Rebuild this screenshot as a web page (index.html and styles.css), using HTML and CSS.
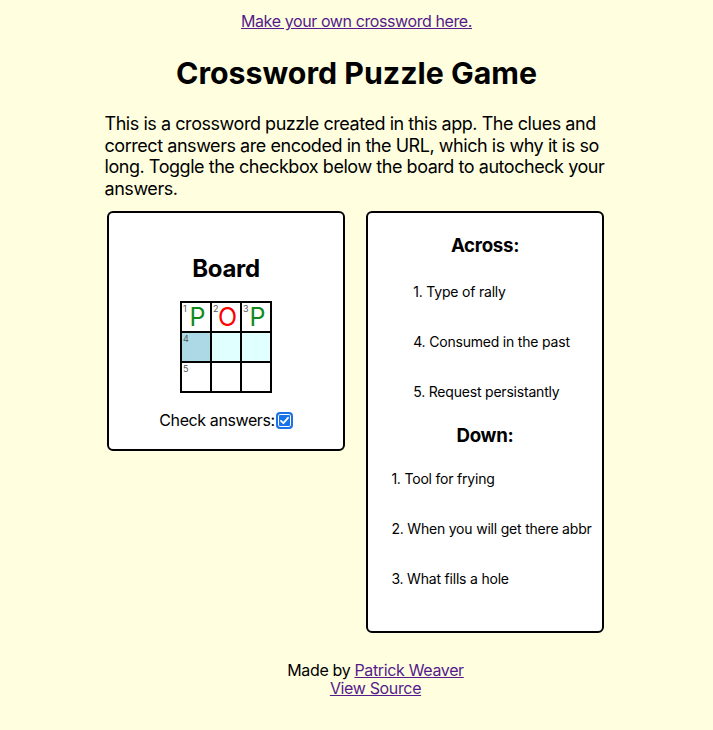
FILE: index.html
```html
<!DOCTYPE html>
<html lang="en">
<head>
<meta charset="utf-8">
<title>Crossword Puzzle Game</title>
<link rel="stylesheet" href="styles.css">
</head>
<body>
<div class="page">
  <a class="top-link" href="#">Make your own crossword here.</a>
  <h1 class="title">Crossword Puzzle Game</h1>
  <p class="intro">This is a crossword puzzle created in this app. The clues and correct answers are encoded in the URL, which is why it is so long. Toggle the checkbox below the board to autocheck your answers.</p>
  <div class="cards">
    <section class="card board-card">
      <h2 class="board-title">Board</h2>
      <div class="grid">
        <div class="cell"><span class="num">1</span><span class="letter ok">P</span></div>
        <div class="cell"><span class="num">2</span><span class="letter bad">O</span></div>
        <div class="cell"><span class="num">3</span><span class="letter ok">P</span></div>
        <div class="cell active"><span class="num">4</span></div>
        <div class="cell word"></div>
        <div class="cell word"></div>
        <div class="cell"><span class="num">5</span></div>
        <div class="cell"></div>
        <div class="cell"></div>
      </div>
      <label class="check">Check answers:<span class="checkbox"><svg width="11" height="11" viewBox="0 0 11 11"><path d="M2 5.8 L4.4 8.2 L9 2.8" fill="none" stroke="#fff" stroke-width="1.8" stroke-linecap="round" stroke-linejoin="round"/></svg></span></label>
    </section>
    <section class="card clue-card">
      <h3 class="clue-title">Across:</h3>
      <ol class="clues across">
        <li>1. Type of rally</li>
        <li>4. Consumed in the past</li>
        <li>5. Request persistantly</li>
      </ol>
      <h3 class="clue-title">Down:</h3>
      <ol class="clues down">
        <li>1. Tool for frying</li>
        <li>2. When you will get there abbr</li>
        <li>3. What fills a hole</li>
      </ol>
    </section>
  </div>
  <footer class="footer">Made by <a href="#">Patrick Weaver</a><br><a href="#">View Source</a></footer>
</div>
</body>
</html>
```
FILE: styles.css
```css
html, body {
  margin: 0;
  padding: 0;
}
body {
  background: #ffffe0;
  color: #000;
  font-family: Inter, "Noto Sans", sans-serif;
}
a {
  color: #551a8b;
}
.page {
  width: 504px;
  margin: 0 auto;
  padding-top: 12px;
  text-align: center;
}
.top-link {
  display: block;
  font-size: 16px;
  line-height: 19px;
  letter-spacing: -0.4px;
}
.title {
  font-size: 30.3px;
  line-height: 36px;
  font-weight: 700;
  margin: 24px 0 0;
}
.intro {
  text-align: left;
  font-size: 18px;
  line-height: 21.7px;
  letter-spacing: -0.45px;
  margin: 22px 0 0;
}
.cards {
  display: grid;
  grid-template-columns: 238px 238px;
  column-gap: 21px;
  justify-content: start;
  align-items: start;
  margin: 11px 0 0 2.5px;
}
.card {
  background: #fff;
  border: 2px solid #000;
  border-radius: 6px;
  display: flex;
  flex-direction: column;
  align-items: center;
}
.board-card {
  padding: 41px 0 19px;
}
.board-title {
  font-size: 24px;
  line-height: 29px;
  letter-spacing: -0.3px;
  margin: 0;
}
.grid {
  margin-top: 18px;
  display: grid;
  grid-template-columns: repeat(3, 28px);
  grid-auto-rows: 28px;
  gap: 2px;
  padding: 2px;
  background: #000;
}
.cell {
  position: relative;
  background: #fff;
  display: flex;
  align-items: center;
  justify-content: center;
}
.cell.active {
  background: #add8e6;
}
.cell.word {
  background: #e0ffff;
}
.num {
  position: absolute;
  top: 1px;
  left: 1px;
  font-size: 9px;
  line-height: 10px;
  color: #555;
}
.letter {
  font-size: 25px;
  line-height: 28px;
  padding-left: 3px;
}
.ok {
  color: #108a1a;
}
.bad {
  color: #ff0000;
}
.check {
  margin-top: 18px;
  font-size: 16px;
  line-height: 19px;
  letter-spacing: -0.4px;
  display: flex;
  align-items: center;
}
.checkbox {
  width: 13px;
  height: 13px;
  margin-left: 1px;
  border: 2px solid #1a73e8;
  border-radius: 4px;
  box-shadow: inset 0 0 0 1px #fff;
  background: #1a73e8;
  display: flex;
  align-items: center;
  justify-content: center;
}
.clue-card {
  padding: 22px 0 44px;
}
.clue-title {
  font-size: 18.7px;
  line-height: 22px;
  letter-spacing: -0.3px;
  margin: 0;
}
.clues {
  list-style: none;
  padding: 0 0 0 13px;
  margin: 26px 0 25px;
  text-align: left;
  font-size: 14px;
  line-height: 17px;
  letter-spacing: -0.2px;
}
.clues.down {
  margin: 23px 0 0;
}
.clues li + li {
  margin-top: 33px;
}
.footer {
  margin-top: 28px;
  padding-left: 38px;
  font-size: 16px;
  line-height: 18px;
  letter-spacing: -0.35px;
}
```
